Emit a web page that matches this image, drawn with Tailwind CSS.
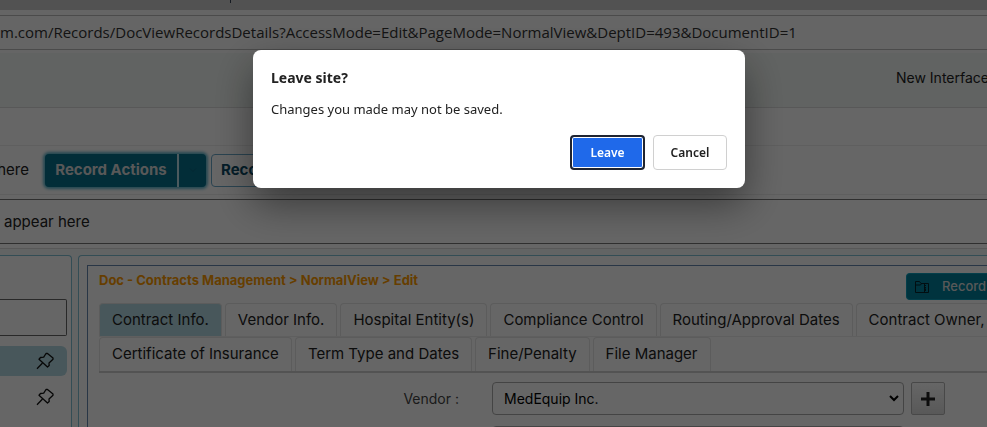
<!DOCTYPE html>
<html lang="en">
<head>
    <meta charset="utf-8">
    <title>Records</title>
    <script src="https://cdn.jsdelivr.net/npm/@tailwindcss/browser@4"></script>
</head>
<body class="h-screen overflow-hidden bg-white font-['Inter',sans-serif] text-[15px] text-[#222]">
    <div class="h-screen overflow-hidden flex flex-col">
        <!-- Browser chrome -->
        <div class="h-[10px] shrink-0 bg-[#cdcdcd] pl-[230px]"><div class="h-[3px] w-px bg-gray-700"></div></div>
        <div class="h-[43px] shrink-0 pt-[5px] bg-[#fcfcfc]">
            <div class="h-[35px] border-y border-[#bbb] flex items-center">
                <label for="address" class="sr-only">Address</label>
                <input id="address" type="text" class="w-full outline-none font-['Open_Sans',sans-serif] text-[15px] text-[#333]" value="m.com/Records/DocViewRecordsDetails?AccessMode=Edit&amp;PageMode=NormalView&amp;DeptID=493&amp;DocumentID=1">
            </div>
        </div>

        <header class="h-[55px] shrink-0 flex items-center justify-end bg-[#f3f8f5] border-b border-[#ddd] pb-[6px]">
            <a href="#" class="w-[91px] whitespace-nowrap text-[14px]">New Interface</a>
        </header>
        <div class="h-[37px] shrink-0"></div>

        <!-- Record toolbar -->
        <div class="h-[50px] shrink-0 flex items-center border-y border-[#eee]">
            <span class="w-[29px] mr-4 flex justify-end">here</span>
            <div class="flex h-[33px] rounded-sm bg-[#05708c] text-[#ddd] shadow-[0_0_3px_2px_#5bb4cc]">
                <button class="w-[134px] text-[15px] font-bold border-r-2 border-[#bfe0ea] whitespace-nowrap">Record Actions</button>
                <button class="w-[27px] flex items-center justify-center" aria-label="More actions">
                    <svg class="size-2" viewBox="0 0 8 8" fill="none" stroke="#0b6480"><path d="M1 2.500l3 3 3-3"/></svg>
                </button>
            </div>
            <button class="ml-[5px] h-[33px] px-[9px] rounded border border-[#6aa8c8] text-[15px] font-bold text-[#0b4a66]">Record Views</button>
        </div>
        <div class="shrink-0 pt-1 pb-1 border-b border-[#ddd]">
            <div class="h-[45px] border-y border-[#777] flex items-center pl-1 pt-px">appear here</div>
        </div>

        <div class="flex-1 min-h-0 flex gap-[6px] pt-[6px] bg-[#f4f9fb]">
            <!-- Side list -->
            <aside class="w-[72px] shrink-0 bg-white border border-l-0 border-b-0 border-[#7fc0d4] rounded-tr pr-1">
                <input id="filter" type="text" aria-label="Filter" class="mt-[43px] block w-full h-[37px] border border-l-0 border-[#666] rounded-r-xs outline-none">
                <div class="mt-[10px] h-[30px] rounded-r-md bg-[#b4dae3] flex items-center justify-end pr-[13px]">
                    <svg class="size-[18px]" viewBox="0 0 18 18" fill="none" stroke="#111" stroke-width="1.300" stroke-linejoin="round"><path d="M10 1.500h1.500l5.500 4.500v1.300l-4 3.700.2 2.500-1.700 1.500-8.500-7.800 1.500-1.700 3.200-.3zM6.300 11.300l-5.300 5.500"/></svg>
                </div>
                <div class="mt-[6px] h-[30px] flex items-center justify-end pr-[13px]">
                    <svg class="size-[18px]" viewBox="0 0 18 18" fill="none" stroke="#111" stroke-width="1.300" stroke-linejoin="round"><path d="M10 1.500h1.500l5.500 4.500v1.300l-4 3.700.2 2.500-1.700 1.500-8.500-7.800 1.500-1.700 3.200-.3zM6.300 11.300l-5.300 5.500"/></svg>
                </div>
            </aside>

            <main class="flex-1 min-w-0 bg-white border-t border-l border-[#7fc0d4] rounded-tl pl-2 pt-[9px] overflow-hidden">
                <div class="h-full border-t border-l border-[#6688b0] pl-[11px]">
                    <div class="flex justify-between h-[37px]">
                        <h1 class="pt-[5px] text-[13px] leading-[18px] font-bold text-[#ff9c00]">Doc - Contracts Management &gt; NormalView &gt; Edit</h1>
                        <button class="mt-[7px] w-[81px] h-[27px] pl-2 rounded-l-sm bg-[#00809b] border border-[#0a9cba] border-r-0 text-[#ddd] text-[13px] font-medium flex items-center gap-[13px] whitespace-nowrap">
                            <svg class="size-[14px] shrink-0" viewBox="0 0 14 14" fill="none" stroke="#05232b"><path d="M.5 12.500v-11h4l1.500 2h7.500v9zM.5 5h5l1-1.500M9.500 3.500v9M9.500 5.500h1.500M9.500 7.500h1.500M10.500 8.500v2.500"/></svg>
                            Record
                        </button>
                    </div>
                    <nav class="border-b-2 border-[#d0d0d0]">
                        <div class="flex gap-[3px] h-[34px] w-max border-b border-[#eee] *:border *:border-b-0 *:border-[#e5e5e5] *:rounded-t *:px-3 *:whitespace-nowrap">
                            <button class="bg-[#b4dae3]">Contract Info.</button>
                            <button>Vendor Info.</button>
                            <button>Hospital Entity(s)</button>
                            <button>Compliance Control</button>
                            <button>Routing/Approval Dates</button>
                            <button>Contract Owner,</button>
                        </div>
                        <div class="flex gap-[3px] h-[34px] *:border *:border-b-0 *:border-[#e5e5e5] *:rounded-t *:px-3 *:whitespace-nowrap">
                            <button>Certificate of Insurance</button>
                            <button>Term Type and Dates</button>
                            <button>Fine/Penalty</button>
                            <button>File Manager</button>
                        </div>
                    </nav>
                    <div class="mt-[9px] flex items-center text-[14px]">
                        <label for="vendor" class="w-[360px] text-right text-[#444]">Vendor :</label>
                        <div class="relative ml-[33px] w-[412px]">
                            <select id="vendor" class="block appearance-none w-full h-[33px] pl-[11px] border border-[#aaa] rounded text-black">
                                <option>MedEquip Inc.</option>
                            </select>
                            <svg class="absolute right-[5px] top-[12px] w-[10px] h-[8px] pointer-events-none" viewBox="0 0 10 8" fill="none" stroke="#000" stroke-width="2"><path d="M1 2l4 4 4-4"/></svg>
                        </div>
                        <button class="ml-[7px] w-[34px] h-[33px] rounded-xs border border-[#b5b5b5] bg-linear-to-b from-white to-[#ddd] flex items-center justify-center" aria-label="Add vendor">
                            <svg class="size-[14px]" viewBox="0 0 14 14" stroke="#222" stroke-width="3"><path d="M7 0v14M0 7h14"/></svg>
                        </button>
                    </div>
                    <select class="mt-[11px] ml-[393px] block appearance-none w-[412px] h-[33px] border border-[#aaa] rounded" aria-label="Contract type"></select>
                </div>
            </main>
        </div>
    </div>

    <!-- Leave confirmation -->
    <div class="fixed inset-0 bg-black/60 flex items-start justify-center pt-[50px] pl-[11px]">
        <div role="alertdialog" aria-labelledby="leave-title" class="w-[492px] rounded-lg bg-white p-[18px] shadow-[0_16px_40px_rgba(0,0,0,0.45)] font-['Noto_Sans',sans-serif]">
            <h2 id="leave-title" class="text-[14px] leading-[20px] font-bold text-[#222]">Leave site?</h2>
            <p class="mt-[11px] text-[13px] leading-[20px]">Changes you made may not be saved.</p>
            <div class="mt-[16px] flex justify-end gap-2 text-[12px] font-semibold">
                <button class="w-[75px] h-[35px] rounded-sm border-2 border-[#1f2430] bg-[#1f69ea] text-white shadow-[inset_0_0_0_1px_#fff]">Leave</button>
                <button class="w-[74px] h-[35px] rounded-sm border border-[#d0d0d0] bg-white text-[#222]">Cancel</button>
            </div>
        </div>
    </div>
</body>
</html>
